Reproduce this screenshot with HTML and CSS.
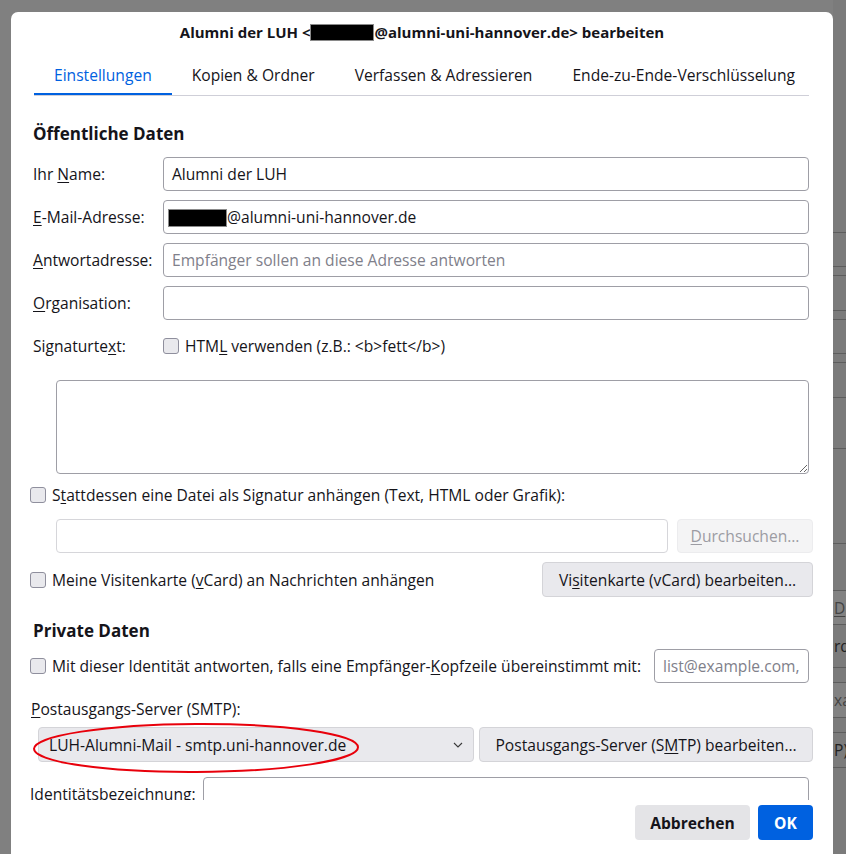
FILE: index.html
```html
<!DOCTYPE html>
<html lang="de">
<head>
  <meta charset="UTF-8" />
  <meta name="viewport" content="width=device-width, initial-scale=1.0" />
  <title>Identität bearbeiten</title>
  <link rel="stylesheet" href="styles.css">
</head>
<body>
  <div class="screen">
    <div class="dialog">
      <div class="dialog-title">Alumni der LUH &lt;<span class="redacted"></span>@alumni-uni-hannover.de&gt; bearbeiten</div>

      <div class="tabs">
        <div class="tab active">Einstellungen</div>
        <div class="tab">Kopien &amp; Ordner</div>
        <div class="tab">Verfassen &amp; Adressieren</div>
        <div class="tab">Ende-zu-Ende-Verschlüsselung</div>
      </div>

      <div class="content">
        <h2 class="section-title">Öffentliche Daten</h2>

        <div class="form-grid">
          <label>Ihr <u>N</u>ame:</label>
          <div class="field">Alumni der LUH</div>

          <label><u>E</u>-Mail-Adresse:</label>
          <div class="field"><span class="redacted small"></span>@alumni-uni-hannover.de</div>

          <label><u>A</u>ntwortadresse:</label>
          <div class="field"><span class="placeholder">Empfänger sollen an diese Adresse antworten</span></div>

          <label><u>O</u>rganisation:</label>
          <div class="field"></div>

          <label>Signaturte<u>x</u>t:</label>
          <div class="check-row"><span class="checkbox"></span><span>HTM<u>L</u> verwenden (z.B.: &lt;b&gt;fett&lt;/b&gt;)</span></div>
        </div>

        <textarea class="signature"></textarea>

        <div class="check-row outdent sig-file">
          <span class="checkbox"></span><span>S<u>t</u>attdessen eine Datei als Signatur anhängen (Text, HTML oder Grafik):</span>
        </div>

        <div class="file-row">
          <div class="field disabled"></div>
          <button class="btn disabled browse"><u>D</u>urchsuchen…</button>
        </div>

        <div class="vcard-row">
          <div class="check-row"><span class="checkbox"></span><span>Meine Visitenkarte (<u>v</u>Card) an Nachrichten anhängen</span></div>
          <button class="btn vcard">Vi<u>s</u>itenkarte (vCard) bearbeiten…</button>
        </div>

        <h2 class="section-title private">Private Daten</h2>

        <div class="reply-row">
          <div class="check-row"><span class="checkbox"></span><span>Mit dieser Identität antworten, falls eine Empfänger-<u>K</u>opfzeile übereinstimmt mit:</span></div>
          <div class="field reply-field"><span class="placeholder">list@example.com,</span></div>
        </div>

        <div class="smtp-label"><u>P</u>ostausgangs-Server (SMTP):</div>

        <div class="smtp-row">
          <div class="select">
            <span>LUH-Alumni-Mail - smtp.uni-hannover.de</span>
            <svg class="chevron" width="10" height="6" viewBox="0 0 10 6"><path d="M1 1l4 4 4-4" fill="none" stroke="#3a3a3a" stroke-width="1.1"/></svg>
            <svg class="marker" width="330" height="54" viewBox="0 0 330 54"><ellipse cx="164" cy="26" rx="162" ry="24" fill="none" stroke="#e8000b" stroke-width="2" transform="rotate(-0.3 164 26)"/></svg>
          </div>
          <button class="btn smtp-edit">Postausgangs-Server (S<u>M</u>TP) bearbeiten…</button>
        </div>

        <div class="ident-row">
          <label>Identitätsbezeichnung:</label>
          <div class="field"></div>
        </div>
      </div>

      <div class="footer">
        <button class="btn footer-btn cancel">Abbrechen</button>
        <button class="btn footer-btn ok">OK</button>
      </div>
    </div>

    <div class="behind">
      <div class="cell" style="height: 233px"></div>
      <div class="cell" style="height: 34px"></div>
      <div class="cell" style="height: 9px"></div>
      <div class="cell" style="height: 35px"></div>
      <div class="cell" style="height: 9px"></div>
      <div class="cell" style="height: 34px"></div>
      <div class="cell" style="height: 9px"></div>
      <div class="cell" style="height: 35px"></div>
      <div class="cell" style="height: 51px"></div>
      <div class="cell" style="height: 95px"></div>
      <div class="cell" style="height: 47px"></div>
      <div class="cell light" style="height: 34px"><u>D</u></div>
      <div class="cell" style="height: 43px">rd)</div>
      <div class="cell" style="height: 15px"></div>
      <div class="cell light" style="height: 35px">xa</div>
      <div class="cell" style="height: 15px"></div>
      <div class="cell" style="height: 35px">P)</div>
      <div class="cell" style="height: 120px"></div>
    </div>
  </div>
</body>
</html>
```

FILE: styles.css
```css
* { box-sizing: border-box; }

html, body {
  margin: 0;
  height: 100%;
}

body {
  background: #808080;
  font-family: 'Open Sans', 'Noto Sans', sans-serif;
  font-size: 15.6px;
  color: #15141a;
  overflow: hidden;
}

u {
  text-decoration-thickness: 1px;
  text-underline-offset: 2px;
}

.screen {
  display: flex;
  height: 854px;
  padding: 12px 0 0 11px;
}

/* dialog */

.dialog {
  width: 822px;
  height: 842px;
  flex: none;
  background: #fff;
  border-radius: 7px 7px 0 0;
  display: flex;
  flex-direction: column;
}

.dialog-title {
  height: 45px;
  padding-top: 10px;
  line-height: 20px;
  text-align: center;
  font-size: 15px;
  font-weight: bold;
  white-space: nowrap;
}

.redacted {
  display: inline-block;
  width: 64px;
  height: 17px;
  background: #000;
  border: 1px solid #8a8a8a;
  vertical-align: -3px;
}

.redacted.small {
  width: 59px;
  height: 18px;
  margin-left: -4px;
  vertical-align: -4px;
}

.tabs {
  display: flex;
  margin: 0 24px 0 23px;
  border-bottom: 1px solid #cfcfd8;
}

.tab {
  padding: 8px 20px;
  line-height: 20px;
  border-bottom: 2px solid transparent;
  white-space: nowrap;
}

.tab.active {
  color: #0061e0;
  border-bottom-color: #0061e0;
}

.content {
  flex: 1;
  overflow: hidden;
  padding: 26px 20px 0 22px;
}

.section-title {
  margin: 0;
  font-size: 17px;
  font-weight: bold;
  line-height: 24px;
}

.section-title.private {
  margin-top: 22px;
}

.form-grid {
  display: grid;
  grid-template-columns: 130px 1fr;
  row-gap: 9px;
  align-items: center;
  margin: 11px 4px 0 0;
}

.form-grid label {
  white-space: nowrap;
}

.field {
  height: 34px;
  border: 1px solid #9e9ea6;
  border-radius: 4px;
  padding: 0 8px;
  line-height: 32px;
  white-space: nowrap;
  overflow: hidden;
  background: #fff;
}

.field.disabled {
  border-color: #d6d6da;
}

.placeholder {
  color: #80808a;
}

.checkbox {
  width: 16px;
  height: 16px;
  flex: none;
  border: 1px solid #8f8f9d;
  border-radius: 3px;
  background: #e9e9ed;
}

.check-row {
  display: flex;
  align-items: center;
  gap: 6px;
  line-height: 20px;
  white-space: nowrap;
}

.form-grid .check-row {
  height: 34px;
}

.outdent {
  margin-left: -3px;
}

.signature {
  display: block;
  width: 753px;
  height: 94px;
  margin: 17px 0 0 23px;
  border: 1px solid #9e9ea6;
  border-radius: 4px;
  resize: both;
  font: inherit;
}

.sig-file {
  margin-top: 10px;
  height: 22px;
}

.file-row {
  display: flex;
  gap: 9px;
  margin: 13px 0 0 23px;
}

.file-row .field {
  flex: 1;
}

.btn {
  height: 35px;
  padding: 0 12px;
  border: 1px solid #d4d4d8;
  border-radius: 4px;
  background: #e9e9ed;
  font: inherit;
  color: inherit;
  white-space: nowrap;
}

.btn.disabled {
  background: #f4f4f5;
  border-color: #ececee;
  color: #9c9ca3;
}

.browse { width: 136px; height: 34px; }

.vcard-row {
  display: flex;
  align-items: center;
  justify-content: space-between;
  margin: 9px 0 0 -3px;
}

.vcard { width: 271px; }

.reply-row {
  display: flex;
  align-items: center;
  justify-content: space-between;
  margin: 6px 4px 0 -3px;
}

.reply-field {
  flex: none;
  width: 155px;
}

.smtp-label {
  margin: 16px 0 0 -2px;
  line-height: 20px;
}

.smtp-row {
  display: flex;
  gap: 5px;
  margin: 8px 0 0 5px;
}

.select {
  position: relative;
  width: 436px;
  height: 35px;
  flex: none;
  display: flex;
  align-items: center;
  justify-content: space-between;
  padding: 0 10px;
  border: 1px solid #d4d4d8;
  border-radius: 4px;
  background: #e9e9ed;
  white-space: nowrap;
}

.marker {
  position: absolute;
  left: -7px;
  top: -6px;
  pointer-events: none;
}

.smtp-edit { flex: 1; }

.ident-row {
  display: flex;
  align-items: center;
  margin: 15px 4px 0 -3px;
}

.ident-row label {
  width: 173px;
  flex: none;
  white-space: nowrap;
}

.ident-row .field {
  flex: 1;
}

/* footer */

.footer {
  height: 54px;
  flex: none;
  display: flex;
  justify-content: flex-end;
  gap: 8px;
  padding: 5px 20px 0;
}

.footer-btn {
  font-weight: bold;
  border: none;
}

.cancel { width: 115px; background: #e4e4e7; }

.ok {
  width: 55px;
  background: #0061e0;
  color: #fff;
}

/* window behind the dialog */

.behind {
  width: 13px;
  height: 854px;
  margin-top: -12px;
  overflow: hidden;
  background: #7b7b7b;
  display: flex;
  flex-direction: column;
}

.behind .cell {
  flex: none;
  border-bottom: 1px solid #5d5d5d;
  display: flex;
  align-items: center;
  white-space: nowrap;
  color: #222;
  padding-left: 1px;
}

.behind .cell.light {
  background: #828282;
  color: #444;
}
```
